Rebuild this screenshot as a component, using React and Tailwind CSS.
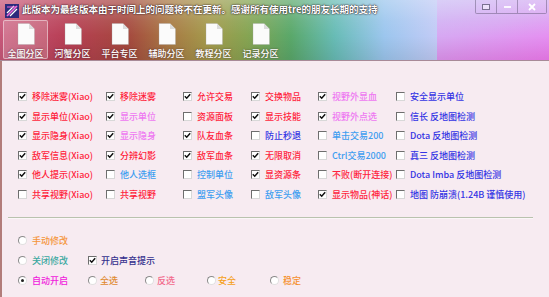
import React from "react";

const R = "text-[#ff1f3d]";
const V = "text-[#ee78f2]";
const B = "text-[#3434e4]";
const L = "text-[#3f9ef0]";

const rows = [
  [[true, "移除迷雾(Xiao)", R], [true, "移除迷雾", R], [true, "允许交易", R], [true, "交换物品", R], [true, "视野外显血", V], [false, "安全显示单位", B]],
  [[true, "显示单位(Xiao)", R], [true, "显示单位", V], [false, "资源面板", R], [true, "显示技能", R], [true, "视野外点选", V], [false, "信长 反地图检测", B]],
  [[true, "显示隐身(Xiao)", R], [true, "显示隐身", V], [true, "队友血条", R], [false, "防止秒退", B], [false, "单击交易200", L], [false, "Dota 反地图检测", B]],
  [[true, "敌军信息(Xiao)", R], [true, "分辨幻影", R], [true, "敌军血条", R], [true, "无限取消", R], [false, "Ctrl交易2000", L], [false, "真三 反地图检测", B]],
  [[true, "他人提示(Xiao)", R], [false, "他人选框", L], [false, "控制单位", L], [true, "显资源条", R], [false, "不败(断开连接)", R], [false, "Dota Imba 反地图检测", B]],
  [[false, "共享视野(Xiao)", R], [false, "共享视野", R], [false, "盟军头像", L], [false, "敌军头像", L], [true, "显示物品(神话)", R], [false, "地图 防崩溃(1.24B 谨慎使用)", B]],
];

const tabs = ["全图分区", "河蟹分区", "平台专区", "辅助分区", "教程分区", "记录分区"];

function Check({ on }) {
  return (
    <span className="w-[9px] h-[9px] shrink-0 bg-white border border-t-[#6e6e6e] border-l-[#6e6e6e] border-b-[#d8d8d8] border-r-[#d8d8d8] flex items-center justify-center">
      {on && (
        <svg width="7" height="7" viewBox="0 0 7 7">
          <path d="M0.8 3.3 L2.7 5.2 L6.2 1.3" stroke="#111" strokeWidth="1.5" fill="none" />
        </svg>
      )}
    </span>
  );
}

function Radio({ on }) {
  return (
    <span className="w-[9px] h-[9px] shrink-0 rounded-full bg-white border border-t-[#8a8a8a] border-l-[#8a8a8a] border-b-[#e0e0e0] border-r-[#e0e0e0] flex items-center justify-center">
      {on && <span className="w-[3px] h-[3px] rounded-full bg-[#222]" />}
    </span>
  );
}

function DocIcon() {
  return (
    <svg width="18" height="22" viewBox="0 0 18 22">
      <path d="M1 0.5 H12 L17.5 6 V21.5 H1 Z" fill="#fbfbfb" stroke="rgba(160,160,160,0.5)" strokeWidth="0.6" />
      <path d="M12 0.5 V6 H17.5 Z" fill="#dcdcdc" />
    </svg>
  );
}

export default function App() {
  return (
    <div className="w-[549px] h-[297px] overflow-hidden font-['Noto_Sans_CJK_SC',sans-serif] text-[9px] leading-none font-medium">
      {/* header */}
      <div className="relative h-[61px] bg-[linear-gradient(to_right,#c8587a_0%,#b83f55_12%,#a5473e_23%,#a87a44_31%,#a49a4c_38%,#86a452_45%,#5aa86a_53%,#68bcb6_61%,#9cc6ee_70%,#c2cbf6_79.5%,#c6c8f6_80%)] border-b border-[#a88a98]">
        <div className="absolute top-0 bottom-0 left-[437px] right-0 bg-[linear-gradient(165deg,#cbbcf4_0%,#d8a6f2_45%,#f07cf0_100%)]" />
        <div className="absolute inset-0 bg-[linear-gradient(to_bottom,rgba(255,255,255,0.28)_0%,rgba(255,255,255,0.08)_35%,rgba(0,0,0,0)_60%,rgba(0,0,0,0.08)_100%)]" />
        <div className="relative flex h-[20px]">
          <div className="pl-[5px] pt-[4px]">
            <svg width="14" height="14" viewBox="0 0 14 14">
              <rect x="0" y="0" width="14" height="14" fill="#2b2a7c" />
              <path d="M2 12 L12 2" stroke="#f06ad8" strokeWidth="1.6" />
              <path d="M5 12 L12 5" stroke="#ffffff" strokeWidth="1.2" />
              <path d="M2 9 L9 2" stroke="#ffffff" strokeWidth="1.2" />
              <path d="M2 3 H11" stroke="#f06ad8" strokeWidth="1" />
            </svg>
          </div>
          <div className="pl-[3px] pt-[5px] text-white font-bold text-[9.5px] whitespace-nowrap [text-shadow:0_0_2px_rgba(40,20,30,0.95),0_0_1px_rgba(40,20,30,0.9)]">
            此版本为最终版本由于时间上的问题将不在更新。感谢所有使用tre的朋友长期的支持
          </div>
          <div className="ml-auto mr-[2px] flex h-[14px] border border-[rgba(90,80,110,0.45)] border-t-0 rounded-b-[2px]">
            <div className="w-[21px] flex items-center justify-center border-r border-[rgba(90,80,110,0.45)]">
              <span className="w-[8px] h-[6px] border border-[#7a7090] bg-[rgba(255,255,255,0.5)]" />
            </div>
            <div className="w-[21px] flex items-center justify-center border-r border-[rgba(90,80,110,0.45)]">
              <span className="w-[7px] h-[2px] bg-[rgba(255,255,255,0.85)]" />
            </div>
            <div className="w-[28px] flex items-center justify-center">
              <svg width="8" height="8" viewBox="0 0 8 8">
                <path d="M1 1 L7 7 M7 1 L1 7" stroke="#ffffff" strokeWidth="1.8" />
              </svg>
            </div>
          </div>
        </div>
        <div className="relative flex pl-[3px] h-[40px]">
          {tabs.map((t, i) => (
            <div
              key={t}
              className={
                i === 0
                  ? "w-[45px] mr-[2px] h-[39px] flex flex-col items-center pt-[2px] border border-[rgba(255,255,255,0.45)] bg-[rgba(255,255,255,0.18)] rounded-[2px]"
                  : "w-[45px] mr-[2px] h-[39px] flex flex-col items-center pt-[2px] border border-transparent"
              }
            >
              <DocIcon />
              <div className="mt-[4px] text-white whitespace-nowrap [text-shadow:0_0_2px_rgba(60,30,40,0.8)]">{t}</div>
            </div>
          ))}
        </div>
      </div>

      {/* body */}
      <div className="h-[236px] bg-[#f7ebf1] border-l-2 border-[#b27c7a] pt-[26px]">
        <div className="grid grid-cols-[88px_77px_68px_67px_78px_1fr] auto-rows-[19.5px] pl-[16px]">
          {rows.map((r, ri) =>
            r.map(([on, label, color], ci) => (
              <div key={ri + "-" + ci} className="flex items-center gap-[5px] whitespace-nowrap">
                <Check on={on} />
                <span className={color}>{label}</span>
              </div>
            ))
          )}
        </div>

        <div className="ml-[6px] mt-[13px] w-[525px] h-[2px] border-t border-[#b9c2ae] bg-[#fbf6f8]" />

        <div className="mt-[11px] pl-[16px]">
          <div className="h-[20px] flex items-center">
            <div className="flex items-center gap-[5px]">
              <Radio on={false} />
              <span className="text-[#f5953a]">手动修改</span>
            </div>
          </div>
          <div className="h-[20px] flex items-center">
            <div className="w-[70px] flex items-center gap-[5px]">
              <Radio on={false} />
              <span className="text-[#3aa8a0]">关闭修改</span>
            </div>
            <div className="flex items-center gap-[4px]">
              <Check on={true} />
              <span className="text-[#34308e]">开启声音提示</span>
            </div>
          </div>
          <div className="h-[20px] flex items-center">
            <div className="w-[70px] flex items-center gap-[5px]">
              <Radio on={true} />
              <span className="text-[#f020dc]">自动开启</span>
            </div>
            <div className="w-[57px] flex items-center gap-[3px]">
              <Radio on={false} />
              <span className="text-[#e08a30]">全选</span>
            </div>
            <div className="w-[62px] flex items-center gap-[3px]">
              <Radio on={false} />
              <span className="text-[#f26a8c]">反选</span>
            </div>
            <div className="w-[63px] flex items-center gap-[2px]">
              <Radio on={false} />
              <span className="text-[#f5a020]">安全</span>
            </div>
            <div className="flex items-center gap-[4px]">
              <Radio on={false} />
              <span className="text-[#f59030]">稳定</span>
            </div>
          </div>
        </div>
      </div>
    </div>
  );
}
